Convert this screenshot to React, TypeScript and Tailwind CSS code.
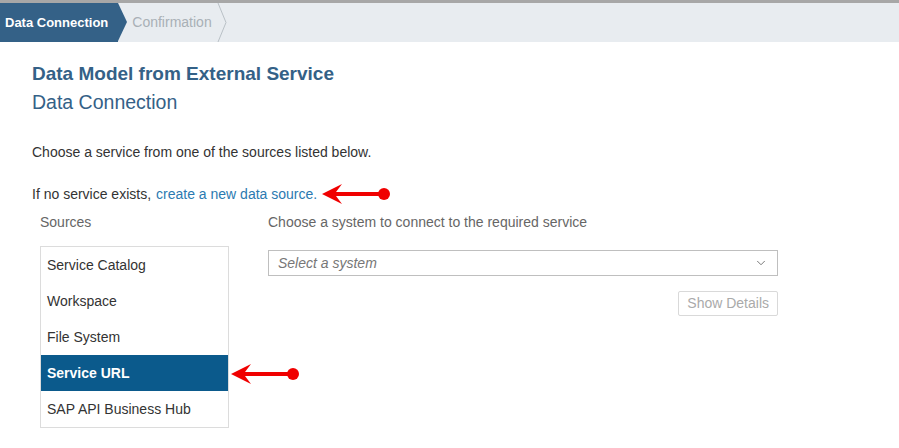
import React from 'react';
import { ChevronDown } from 'lucide-react';

const sources = ['Service Catalog', 'Workspace', 'File System', 'Service URL', 'SAP API Business Hub'];

// red pointer arrow used for annotation
const Pointer: React.FC<{ className?: string }> = ({ className }) => (
  <svg width="74" height="24" viewBox="0 0 74 24" className={className}>
    <path d="M2 12 L22 2 L16 10 L64 10 L64 14 L16 14 L22 22 Z" fill="#f00000" />
    <circle cx="64" cy="12" r="6" fill="#f00000" />
  </svg>
);

export default function App() {
  const selected = 'Service URL';

  return (
    <div className="w-[899px] h-[448px] bg-white overflow-hidden relative" style={{ fontFamily: '"Liberation Sans", Arial, sans-serif' }}>
      {/* cut-off row from above */}
      <div className="h-[3px] bg-[#a7a7a7]" />

      {/* WIZARD STEPS */}
      <div className="h-[39px] bg-[#e8ecf0] flex items-center">
        <div className="relative h-full flex items-center bg-[#346187] pl-[5px] pr-[10px] text-white text-[13px] font-bold">
          Data Connection
          <div className="absolute right-[-9px] top-0 w-0 h-0 border-t-[19.5px] border-b-[19.5px] border-l-[9px] border-t-transparent border-b-transparent border-l-[#346187]" />
        </div>
        <div className="relative h-full flex items-center pl-[14px] pr-[11px] text-[#a9b0b6] text-[14px]">
          Confirmation
          <svg className="absolute right-[-4px] top-0" width="10" height="39" viewBox="0 0 10 39">
            <path d="M1 0 L9 19.5 L1 39" fill="none" stroke="#b9c0c6" strokeWidth="1" />
          </svg>
        </div>
      </div>

      {/* CONTENT */}
      <div className="pl-[32px] pt-[21px]">
        <h1 className="text-[19px] font-bold text-[#346187] leading-[22px]">Data Model from External Service</h1>
        <h2 className="text-[19.5px] text-[#346187] leading-[26px] mt-[4px]">Data Connection</h2>

        <p className="text-[14px] text-[#333] mt-[28px] leading-[18px]">Choose a service from one of the sources listed below.</p>

        <div className="flex items-center mt-[21px] text-[14px] leading-[18px]">
          <span className="text-[#333]">If no service exists,</span>
          <span className="text-[#2b7ab1] ml-[5px]">create a new data source.</span>
          <Pointer className="ml-[3px]" />
        </div>

        <div className="flex mt-[7px]">
          {/* SOURCES */}
          <div className="w-[189px] ml-[8px]">
            <div className="text-[14px] text-[#666] leading-[18px]">Sources</div>
            <div className="mt-[15px] border border-[#dcdcdc]">
              {sources.map((s) => (
                <div
                  key={s}
                  className={`h-[36px] flex items-center px-[6px] text-[14px] ${
                    s === selected ? 'bg-[#0b5a8c] text-white font-bold' : 'text-[#333]'
                  }`}
                >
                  {s}
                </div>
              ))}
            </div>
          </div>

          {/* SYSTEM */}
          <div className="ml-[39px] w-[510px]">
            <div className="text-[14px] text-[#666] leading-[18px]">Choose a system to connect to the required service</div>
            <div className="mt-[19px] h-[26px] border border-[#bfbfbf] flex items-center justify-between px-[9px]">
              <span className="italic text-[14px] text-[#777]">Select a system</span>
              <ChevronDown className="w-[14px] h-[14px] text-[#666]" strokeWidth={1.5} />
            </div>
            <div className="flex justify-end mt-[15px]">
              <div className="h-[25px] px-[8px] border border-[#d9d9d9] rounded-[2px] flex items-center text-[14px] text-[#aaaaaa]">
                Show Details
              </div>
            </div>
          </div>
        </div>
      </div>

      {/* annotation arrow for selected source */}
      <Pointer className="absolute left-[229px] top-[362px]" />
    </div>
  );
}
